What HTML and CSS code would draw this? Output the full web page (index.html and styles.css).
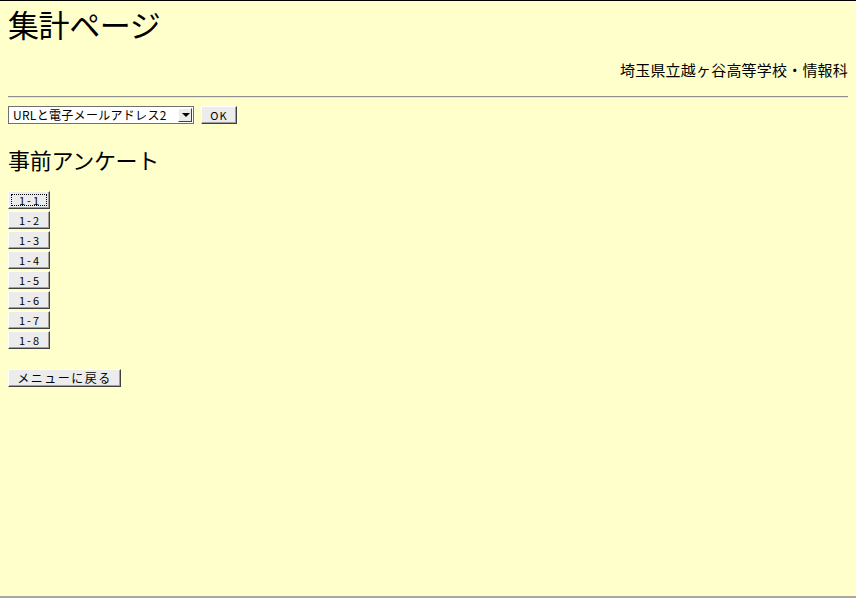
FILE: index.html
```html
<!DOCTYPE html>
<html lang="ja">
<head>
<meta charset="utf-8">
<title>集計ページ</title>
<link rel="stylesheet" href="styles.css">
</head>
<body>
<h1 class="title">集計ページ</h1>
<p class="school">埼玉県立越ヶ谷高等学校・情報科</p>
<hr class="rule">
<form class="pick">
  <span class="selwrap">
    <select class="sel"><option>URLと電子メールアドレス2</option></select>
    <span class="arrow"></span>
  </span>
  <button type="button" class="btn ok">OK</button>
</form>
<h2 class="sub">事前アンケート</h2>
<div class="list">
  <button type="button" class="btn item focus">1-1</button>
  <button type="button" class="btn item">1-2</button>
  <button type="button" class="btn item">1-3</button>
  <button type="button" class="btn item">1-4</button>
  <button type="button" class="btn item">1-5</button>
  <button type="button" class="btn item">1-6</button>
  <button type="button" class="btn item">1-7</button>
  <button type="button" class="btn item">1-8</button>
</div>
<button type="button" class="btn menu">メニューに戻る</button>
</body>
</html>
```
FILE: styles.css
```css
html {
  height: 100%;
  box-sizing: border-box;
  border-top: 1px solid #000;
  border-bottom: 2px solid #a8a8a0;
  background: #ffffcc;
}
body {
  margin: 0;
  padding: 0 8px;
  font-family: "Noto Sans CJK JP", "DejaVu Sans", sans-serif;
  color: #000;
}
.title {
  margin: 0;
  padding-top: 3px;
  font-size: 31px;
  font-weight: normal;
  line-height: 40px;
  letter-spacing: -0.4px;
}
.school {
  margin: 16px 0 0;
  text-align: right;
  font-size: 15px;
  line-height: 20px;
  letter-spacing: 0.2px;
}
.rule {
  margin: 16px 0 8px;
  border: 0;
  border-top: 1px solid #909090;
  border-bottom: 1px solid #e8e8d0;
  height: 0;
}
.pick {
  display: flex;
  align-items: center;
  gap: 7px;
  margin: 0;
}
.selwrap {
  position: relative;
  display: block;
  width: 186px;
  height: 18px;
}
.sel {
  appearance: none;
  -webkit-appearance: none;
  display: block;
  width: 186px;
  height: 18px;
  font-family: "Noto Sans CJK JP", monospace;
  font-size: 12px;
  letter-spacing: 0.3px;
  padding: 0 0 0 4px;
  border: 1px solid #707070;
  border-radius: 0;
  background: #fff;
  line-height: 16px;
  color: #000;
}
.arrow {
  position: absolute;
  right: 2px;
  top: 2px;
  width: 14px;
  height: 14px;
  box-sizing: border-box;
  background: #ececec;
  border: 1px solid;
  border-color: #fff #404040 #404040 #fff;
}
.arrow::after {
  content: "";
  position: absolute;
  left: 3px;
  top: 4px;
  border-left: 4px solid transparent;
  border-right: 4px solid transparent;
  border-top: 4px solid #000;
}
.btn {
  font-family: "Noto Sans CJK JP", monospace;
  font-size: 11px;
  line-height: 14px;
  height: 18px;
  padding: 0;
  background: #ececec;
  border: 1px solid;
  border-color: #fff #404040 #404040 #fff;
  box-shadow: inset -1px -1px 0 #a0a0a0;
  border-radius: 0;
  color: #000;
}
.ok {
  width: 36px;
  letter-spacing: 1px;
}
.sub {
  margin: 21px 0 0;
  font-size: 22px;
  font-weight: normal;
  line-height: 28px;
  letter-spacing: -0.3px;
}
.list {
  display: flex;
  flex-direction: column;
  align-items: flex-start;
  gap: 2px;
  margin-top: 18px;
}
.item {
  width: 42px;
  letter-spacing: 2px;
  padding-left: 2px;
}
.focus {
  outline: 1px dotted #000;
  outline-offset: -4px;
}
.menu {
  display: block;
  margin-top: 20px;
  width: 113px;
  font-size: 12px;
  letter-spacing: 1.5px;
}
```
